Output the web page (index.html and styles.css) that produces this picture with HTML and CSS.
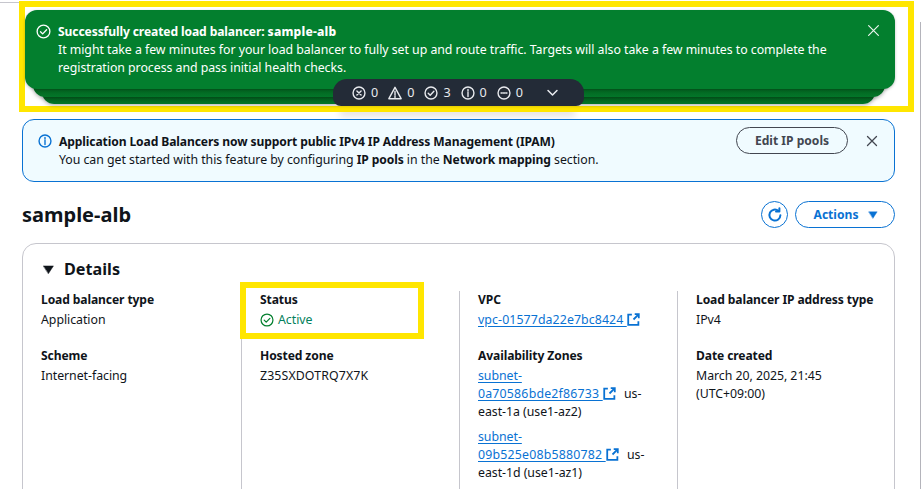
FILE: index.html
```html
<!DOCTYPE html>
<html lang="en">
<head>
<meta charset="utf-8">
<title>sample-alb</title>
<link rel="stylesheet" href="styles.css">
</head>
<body>
<div class="page">
  <section class="notice-frame">
    <div class="flash-stack">
      <div class="flash-layer layer-3"></div>
      <div class="flash-layer layer-2"></div>
      <div class="flash">
        <svg class="flash-icon" viewBox="0 0 16 16"><circle cx="8" cy="8" r="6.8"/><path d="M4.8 8.2l2.3 2.3 4.2-4.4"/></svg>
        <div class="flash-text">
          <div class="flash-title">Successfully created load balancer: <span class="flash-name">sample-alb</span></div>
          <div>It might take a few minutes for your load balancer to fully set up and route traffic. Targets will also take a few minutes to complete the registration process and pass initial health checks.</div>
        </div>
        <svg class="flash-close" viewBox="0 0 16 16"><path d="M2 2l12 12M14 2L2 14"/></svg>
      </div>
      <div class="pill">
        <span class="pill-item"><svg viewBox="0 0 16 16"><circle cx="8" cy="8" r="6.8"/><path d="M5.6 5.6l4.8 4.8M10.4 5.6l-4.8 4.8"/></svg>0</span>
        <span class="pill-item"><svg viewBox="0 0 16 16"><path d="M8 1.5L15 14.5H1z"/><path d="M8 6v4.5M8 11.6v1.4"/></svg>0</span>
        <span class="pill-item"><svg viewBox="0 0 16 16"><circle cx="8" cy="8" r="6.8"/><path d="M4.8 8.2l2.3 2.3 4.2-4.4"/></svg>3</span>
        <span class="pill-item"><svg viewBox="0 0 16 16"><circle cx="8" cy="8" r="6.8"/><path d="M8 7v5M8 4v1.6"/></svg>0</span>
        <span class="pill-item"><svg viewBox="0 0 16 16"><circle cx="8" cy="8" r="6.8"/><path d="M4.6 8h1.4M7.3 8h1.4M10 8h1.4"/></svg>0</span>
        <svg class="pill-caret" viewBox="0 0 16 16"><path d="M2.5 5.5L8 11l5.5-5.5"/></svg>
      </div>
    </div>
  </section>
  <div class="pill-shadow"></div>

  <section class="info">
    <svg class="info-icon" viewBox="0 0 16 16"><circle cx="8" cy="8" r="6.8"/><path d="M8 7v5M8 4v1.6"/></svg>
    <div class="info-text">
      <div class="strong">Application Load Balancers now support public IPv4 IP Address Management (IPAM)</div>
      <div>You can get started with this feature by configuring <b>IP pools</b> in the <b>Network mapping</b> section.</div>
    </div>
    <button class="btn-edit">Edit IP pools</button>
    <svg class="info-close" viewBox="0 0 16 16"><path d="M2 2l12 12M14 2L2 14"/></svg>
  </section>

  <header class="title-row">
    <h1>sample-alb</h1>
    <button class="btn-refresh" aria-label="Refresh"><svg viewBox="0 0 16 16"><path d="M13.4 8.2A5.5 5.5 0 1 1 11.4 3.8"/><path d="M12.4 1.2v3.4H9"/></svg></button>
    <button class="btn-actions">Actions<svg viewBox="0 0 12 10"><path d="M.8 1h10.4L6 9z"/></svg></button>
  </header>

  <section class="card">
    <h2><svg viewBox="0 0 12 10"><path d="M.5 1h11L6 9.5z"/></svg>Details</h2>
    <div class="grid">
      <div class="col">
        <div class="field"><div class="label">Load balancer type</div><div>Application</div></div>
        <div class="field"><div class="label">Scheme</div><div>Internet-facing</div></div>
      </div>
      <div class="col">
        <div class="field status-field">
          <div class="label">Status</div>
          <div class="active"><svg viewBox="0 0 16 16"><circle cx="8" cy="8" r="6.8"/><path d="M4.8 8.2l2.3 2.3 4.2-4.4"/></svg>Active</div>
        </div>
        <div class="field"><div class="label">Hosted zone</div><div class="id-value">Z35SXDOTRQ7X7K</div></div>
      </div>
      <div class="col col-links">
        <div class="field"><div class="label">VPC</div><div><a class="vpc-link" href="#"><span class="nb">vpc-01577da22e7bc8424 <svg class="ext" viewBox="0 0 16 16"><path d="M6 2H1.5v12.5H14V10"/><path d="M9.5 1.5H14.5V6.5M14.5 1.5L8 8"/></svg></span></a></div></div>
        <div class="field">
          <div class="label">Availability Zones</div>
          <div class="zone"><a href="#">subnet-<wbr><span class="nb id-link">0a70586bde2f86733 <svg class="ext" viewBox="0 0 16 16"><path d="M6 2H1.5v12.5H14V10"/><path d="M9.5 1.5H14.5V6.5M14.5 1.5L8 8"/></svg></span></a>&nbsp; us-east-1a (use1-az2)</div>
          <div class="zone"><a href="#">subnet-<wbr><span class="nb id-link">09b525e08b5880782 <svg class="ext" viewBox="0 0 16 16"><path d="M6 2H1.5v12.5H14V10"/><path d="M9.5 1.5H14.5V6.5M14.5 1.5L8 8"/></svg></span></a>&nbsp; us-east-1d (use1-az1)</div>
        </div>
      </div>
      <div class="col col-last">
        <div class="field"><div class="label">Load balancer IP address type</div><div>IPv4</div></div>
        <div class="field"><div class="label">Date created</div><div>March 20, 2025, 21:45 (UTC+09:00)</div></div>
      </div>
    </div>
  </section>
</div>
</body>
</html>
```
FILE: styles.css
```css
*, *::before, *::after { box-sizing: border-box; }
html, body { margin: 0; padding: 0; height: 489px; overflow: hidden; background: #fff; }
body { font-family: "Noto Sans", "Open Sans", sans-serif; font-size: 12.33px; line-height: 18px; letter-spacing: -.04px; color: #0f141a; }
svg { display: block; fill: none; stroke: currentColor; stroke-width: 1.6; stroke-linecap: round; stroke-linejoin: round; }
button { font-family: inherit; cursor: pointer; background: transparent; }

.page { position: relative; width: 921px; height: 489px; padding-top: 1px; overflow: hidden; }
.page::before { content: ""; position: absolute; left: 0; top: 2px; width: 19px; height: 1px; background: #c6c6cd; }
.page::after { content: ""; position: absolute; right: 0; top: 22px; bottom: 0; width: 1px; background: #b4b4bb; }

.notice-frame { position: relative; z-index: 1; margin-left: 19px; width: 895px; height: 111px; border: 6px solid #ffe600; padding-top: 3px; }
.pill-shadow { position: absolute; left: 345px; top: 111px; width: 225px; height: 1px; box-shadow: 0 0 7px 5px #e6e4e8; }
.flash-stack { position: relative; width: 870px; height: 96px; }
.flash { position: relative; display: flex; align-items: flex-start; height: 79px; padding: 13px 14px 0 11px; color: #fff; background: #037f2e; border-radius: 12px; box-shadow: 0 1px 3px rgba(0,0,0,.25); }
.flash-layer { position: absolute; border-radius: 12px; box-shadow: 0 1px 4px rgba(0,0,0,.35); }
.layer-2 { left: 8px; right: 10px; top: 50px; height: 37px; background: linear-gradient(#04611f 75%, #037629 100%); }
.layer-3 { left: 17px; right: 20px; top: 50px; height: 44px; background: linear-gradient(#04611f 83%, #037629 100%); }
.flash-icon { flex: none; width: 15px; height: 15px; margin: 1px 7px 0 0; stroke-width: 1.4; }
.flash-text { width: 784px; }
.flash-title { font-weight: 700; font-size: 12.1px; letter-spacing: -.11px; }
.flash-name { font-weight: 800; letter-spacing: .2px; }
.flash-close { flex: none; width: 13px; height: 13px; margin: 1px 0 0 25px; stroke-width: 1.5; opacity: .92; }

.pill { position: absolute; left: 308px; top: 69px; width: 251px; height: 27px; display: flex; align-items: center; padding: 0 0 0 19px; color: #e8eaee; background: #232b37; border-radius: 14px 14px 8px 8px; font-size: 12.6px; }
.pill-item { display: flex; align-items: center; gap: 5px; flex: none; width: 36.2px; letter-spacing: .3px; }
.pill-item svg { flex: none; width: 14px; height: 14px; stroke-width: 1.6; }
.pill-caret { width: 13px; height: 13px; margin-left: 13px; stroke-width: 1.9; }

.info { position: relative; z-index: 1; display: flex; align-items: flex-start; margin: 7px 0 0 22px; width: 873px; height: 63px; padding: 7px 16px 0 15px; background: #f0fbff; border: 1px solid #0972d3; border-radius: 12px; }
.info-icon { flex: none; width: 14px; height: 14px; margin: 7px 7px 0 0; color: #0972d3; stroke-width: 1.6; }
.info-text { flex: 1; padding-top: 6px; }
.strong { font-weight: 700; font-size: 12.1px; letter-spacing: -.11px; }
.info b { font-weight: 700; font-size: 12.1px; letter-spacing: -.11px; }
.btn-edit { flex: none; width: 112px; height: 26.5px; padding: 0; color: #424650; font-size: 12.1px; font-weight: 700; border: 1px solid #424650; border-radius: 14px; }
.info-close { flex: none; width: 12px; height: 12px; margin: 8px 0 0 18px; color: #424650; stroke-width: 1.7; }

.title-row { display: flex; align-items: center; margin: 19px 0 0 22px; width: 873px; height: 27px; }
h1 { flex: 1; margin: 0; font-size: 20px; line-height: 27px; font-weight: 700; letter-spacing: 0; }
.btn-refresh { display: flex; align-items: center; justify-content: center; width: 27px; height: 27px; padding: 0; color: #0972d3; border: 1px solid #0972d3; border-radius: 50%; }
.btn-refresh svg { width: 16px; height: 16px; stroke-width: 2; }
.btn-actions { display: flex; align-items: center; justify-content: center; gap: 10px; width: 100px; height: 27px; margin-left: 7px; padding: 0 0 0 2px; color: #0972d3; font-size: 12.1px; font-weight: 700; border: 1px solid #0972d3; border-radius: 14px; }
.btn-actions svg { width: 10px; height: 8px; fill: currentColor; stroke-width: .5; }

.card { margin: 15px 0 0 22px; width: 873px; height: 300px; padding: 14px 0 0 18px; border: 1px solid #c6c6cd; border-radius: 14px; }
h2 { display: flex; align-items: center; gap: 10px; margin: 0 0 11px 2px; height: 22px; font-size: 16.2px; line-height: 22px; font-weight: 700; letter-spacing: 0; }
h2 svg { width: 11px; height: 9px; fill: currentColor; stroke-width: .5; }
.grid { display: grid; grid-template-columns: 200px 218px 218px 205px; }
.col { padding: 0 18px 1px 18px; min-height: 191px; border-left: 1px solid #c6c6cd; }
.col:first-child { padding-left: 0; border-left: 0; }
.col-links { padding-right: 28px; }
.col-last { padding-right: 0; }
.field { margin-bottom: 18px; }
.label { font-weight: 700; font-size: 12.1px; letter-spacing: -.11px; margin-bottom: 2px; }
.status-field { position: relative; }
.status-field::after { content: ""; position: absolute; left: -20px; top: -9px; width: 184px; height: 57px; border: 6px solid #ffe600; }
.active { display: flex; align-items: center; gap: 4px; color: #037f5c; }
.active svg { width: 14px; height: 14px; color: #037f2e; stroke-width: 1.4; }
.id-value { letter-spacing: .12px; }
a { color: #0972d3; text-decoration: underline; text-underline-offset: 2px; }
.vpc-link { letter-spacing: .1px; }
.id-link { letter-spacing: .2px; }
.nb { white-space: nowrap; }
.ext { display: inline-block; width: 13px; height: 13px; margin: 0 2px 0 0; vertical-align: -2px; stroke-width: 2.2; stroke-linecap: butt; stroke-linejoin: miter; }
.zone { margin-bottom: 7px; }
```
